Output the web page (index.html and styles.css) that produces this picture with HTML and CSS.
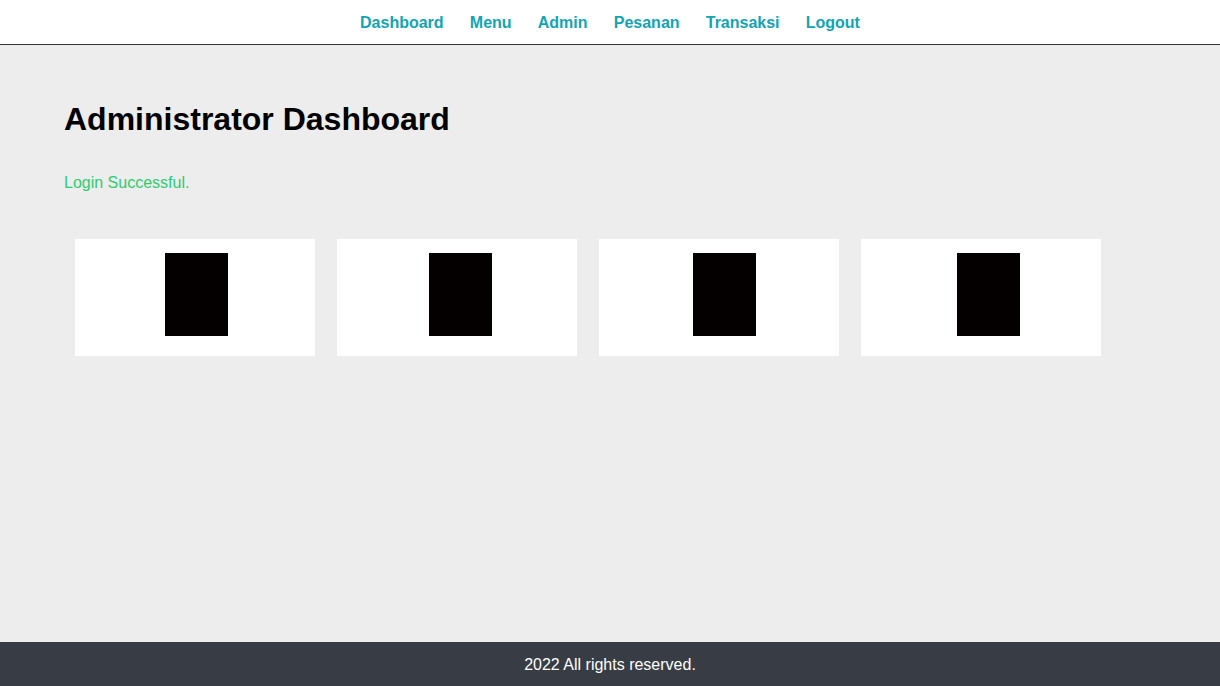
FILE: index.html
```html
<!DOCTYPE html>
<html lang="id">
<head>
<meta charset="utf-8">
<title>Administrator Dashboard</title>
<link rel="stylesheet" href="styles.css">
</head>
<body>
<header class="topnav">
  <nav class="nav-links">
    <a href="#">Dashboard</a>
    <a href="#">Menu</a>
    <a href="#">Admin</a>
    <a href="#">Pesanan</a>
    <a href="#">Transaksi</a>
    <a href="#">Logout</a>
  </nav>
</header>
<main class="content">
  <h1 class="title">Administrator Dashboard</h1>
  <p class="success">Login Successful.</p>
  <section class="cards">
    <div class="card"><div class="thumb"></div></div>
    <div class="card"><div class="thumb"></div></div>
    <div class="card"><div class="thumb"></div></div>
    <div class="card"><div class="thumb"></div></div>
  </section>
</main>
<footer class="footer">2022 All rights reserved.</footer>
</body>
</html>
```

FILE: styles.css
```css
* { box-sizing: border-box; }
html, body { margin: 0; padding: 0; }
body {
  font-family: "Liberation Sans", Arial, sans-serif;
  background: #ededed;
  min-height: 100vh;
  display: flex;
  flex-direction: column;
}
.topnav {
  background: #ffffff;
  height: 45px;
  border-bottom: 1px solid #333333;
  display: flex;
  justify-content: center;
  align-items: flex-start;
}
.nav-links {
  display: flex;
  gap: 26.2px;
  padding-top: 14px;
}
.nav-links a {
  color: #12a4b4;
  font-weight: bold;
  font-size: 16px;
  text-decoration: none;
  line-height: 18px;
}
.content {
  flex: 1;
  padding: 56px 64px 0 64px;
}
.title {
  margin: 0;
  font-size: 32px;
  font-weight: bold;
  color: #000;
  line-height: 37px;
}
.success {
  margin: 36px 0 0 0;
  color: #2ecc71;
  font-size: 16px;
  line-height: 18px;
}
.cards {
  display: flex;
  margin-top: 47px;
}
.card {
  width: 22%;
  margin: 0 1%;
  background: #ffffff;
  height: 117px;
  display: flex;
  justify-content: flex-start;
  padding-top: 14px;
  padding-left: 90px;
}
.card:nth-child(2) { padding-left: 92px; }
.card:nth-child(3) { padding-left: 94px; }
.card:nth-child(4) { padding-left: 96px; }
.thumb {
  width: 63px;
  height: 83px;
  background: #050000;
}
.footer {
  background: #383c45;
  color: #ffffff;
  height: 44px;
  padding-top: 2px;
  display: flex;
  align-items: center;
  justify-content: center;
  font-size: 16px;
}
```
